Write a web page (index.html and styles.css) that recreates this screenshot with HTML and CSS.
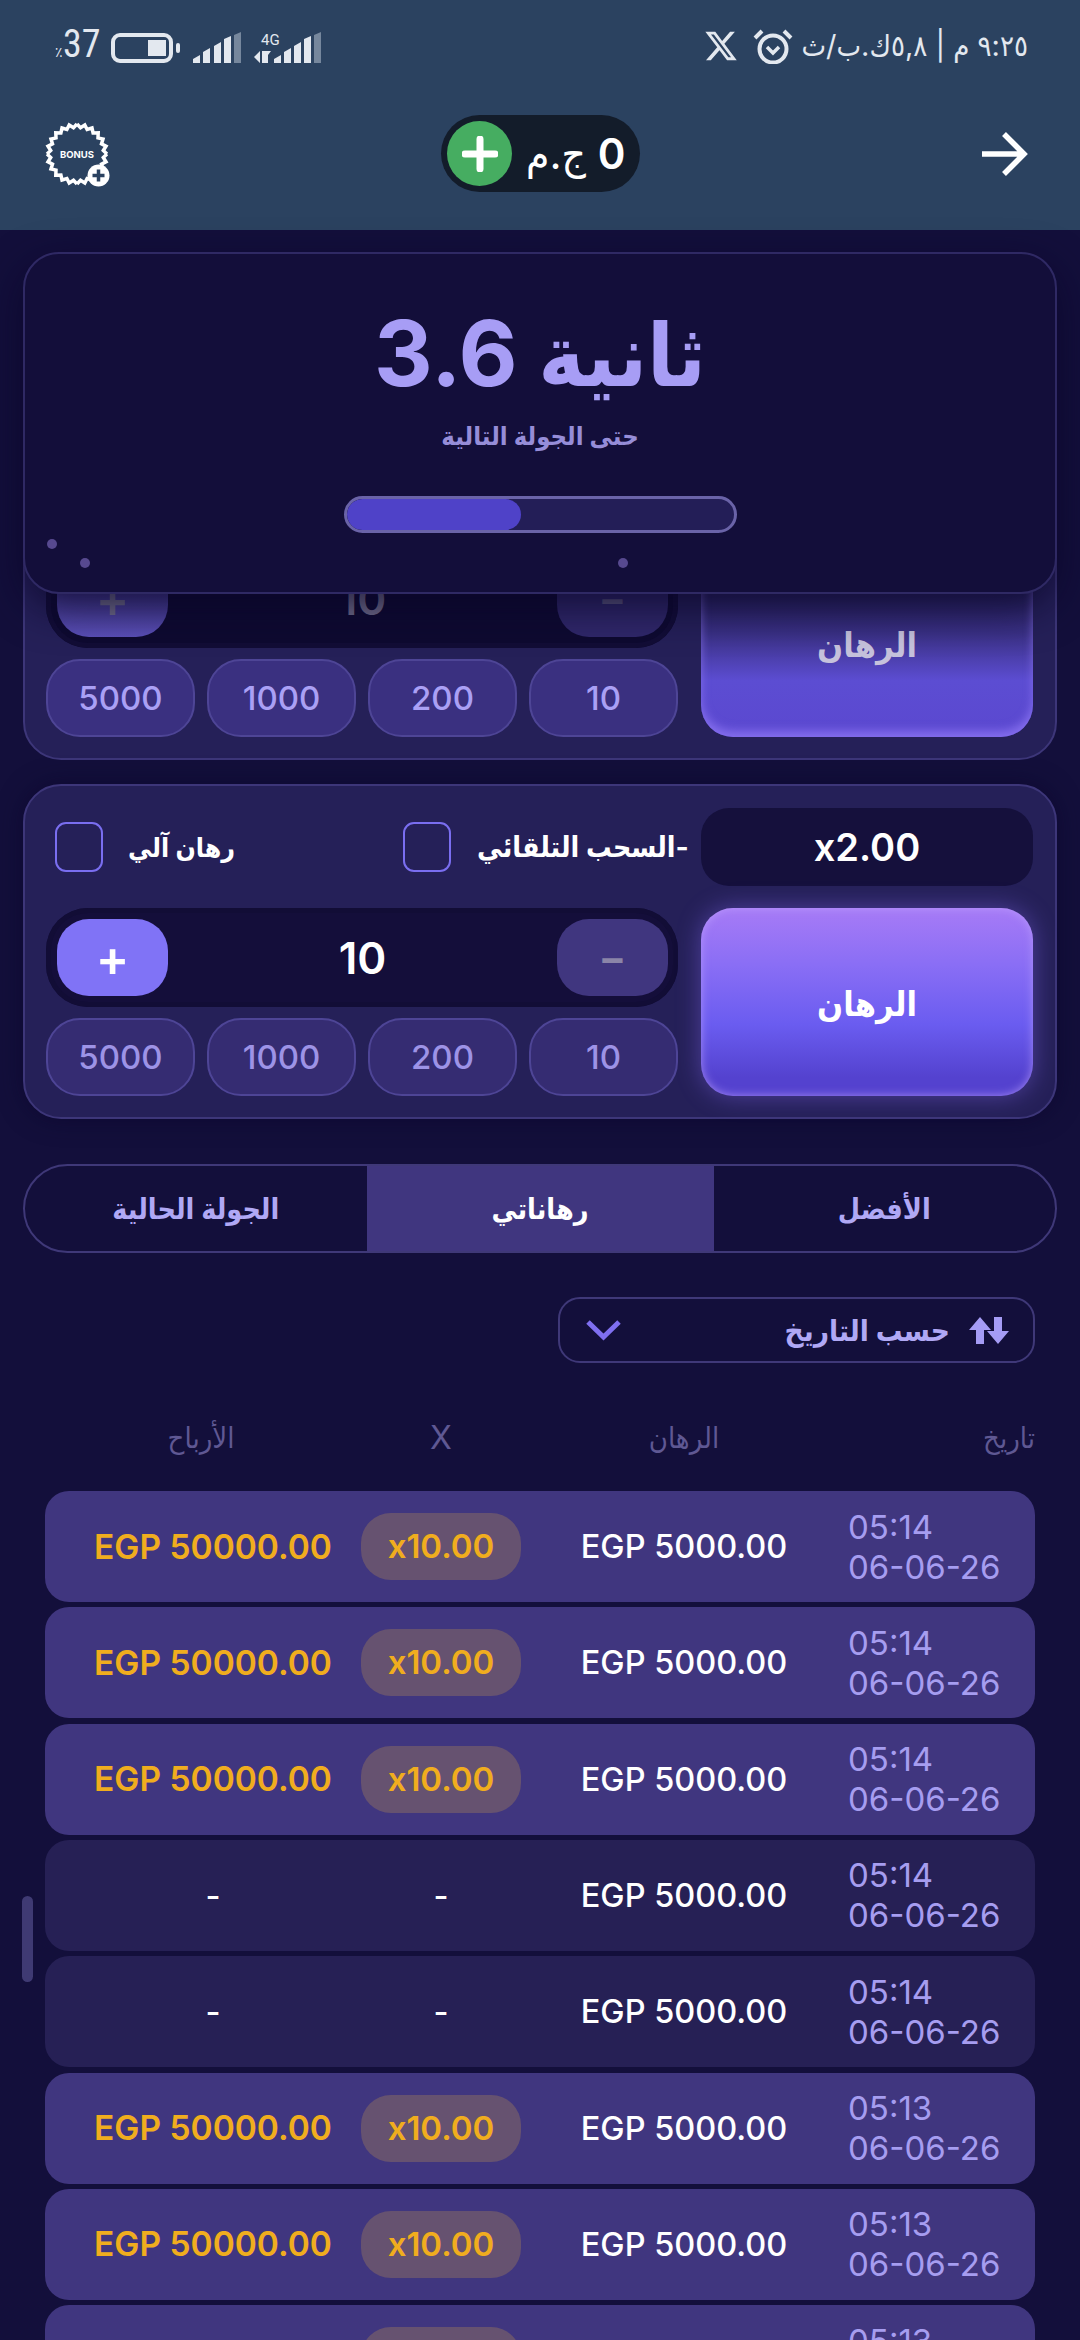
FILE: index.html
```html
<!DOCTYPE html>
<html lang="en">

<head>
    <meta charset="UTF-8">
    <meta name="viewport" content="width=device-width, initial-scale=1.0">
    <title>Bets</title>
    <link rel="stylesheet" href="styles.css">
</head>

<body>
    <header class="top">
        <div class="status">
            <div class="status-left">
                <span class="pct"><small>٪</small>37</span>
                <span class="battery"><i></i></span>
                <svg class="signal" width="48" height="32" viewBox="0 0 48 32" fill="#e3e8ef">
                    <path d="M0 31v-4l7-4v8zM10 31V20l7-4v15zM21 31V14l7-4v21zM31 31V7l7-3v27z"/>
                    <path d="M41 31V3l7-3v31z" fill="#76879d"/>
                </svg>
                <span class="net">
                    <b>4G</b>
                    <svg width="68" height="32" viewBox="0 0 68 32" fill="#e3e8ef">
                        <path d="M0 25l6-6v12zM8 19h0l6 0v12H8zM10 19h7l-3 4v8h-4zM20 31v-4l7-4v8zM30 31V20l7-4v15zM40 31V14l7-4v21zM50 31V7l7-3v27z"/>
                        <path d="M60 31V3l7-3v31z" fill="#76879d"/>
                    </svg>
                </span>
            </div>
            <div class="status-right">
                <svg width="32" height="30" viewBox="1 2 22 20" fill="#e3e8ef">
                    <path d="M18.244 2.25h3.308l-7.227 8.26 8.502 11.24H16.17l-5.214-6.817L4.99 21.75H1.68l7.73-8.835L1.254 2.25H8.08l4.713 6.231zm-1.161 17.52h1.833L7.084 4.126H5.117z"/>
                </svg>
                <svg width="40" height="36" viewBox="0 0 40 36" fill="none" stroke="#e3e8ef">
                    <circle cx="20" cy="21" r="13.5" stroke-width="4"/>
                    <path d="M14 19l6 6 6-6" stroke-width="3.5"/>
                    <path d="M2 10L9 3M38 10L31 3" stroke-width="4"/>
                </svg>
                <span class="speed" dir="rtl">٩:٢٥ م | ٥,٨ك.ب/ث</span>
            </div>
        </div>
        <div class="nav">
            <svg class="bonus" width="66" height="66" viewBox="-33 -33 66 66">
                <defs>
                    <polyline id="quad" points="30,0 26.3,3.5 29,7.8 24.5,10.1 26,15 21,16.1 21.2,21.2 16.1,21 15,26 10.1,24.5 7.8,29 3.5,26.3 0,30"/>
                </defs>
                <g fill="none" stroke="#fff" stroke-width="3.5">
                    <use href="#quad"/>
                    <use href="#quad" transform="rotate(90)"/>
                    <use href="#quad" transform="rotate(180)"/>
                    <use href="#quad" transform="rotate(270)"/>
                </g>
                <text x="0" y="4" text-anchor="middle" class="bonus-text">BONUS</text>
                <circle cx="21.500" cy="21.500" r="11" fill="#fff"/>
                <path d="M21.500 15.500v12M15.500 21.500h12" stroke="#2b4260" stroke-width="3.500"/>
            </svg>
            <div class="balance">
                <span class="add">
                    <svg width="36" height="36" viewBox="0 0 36 36"><path d="M18 3v30M3 18h30" stroke="#fff" stroke-width="7" stroke-linecap="round"/></svg>
                </span>
                <span class="amount" dir="rtl"><b>0</b> ج.م</span>
            </div>
            <svg class="back" width="46" height="44" viewBox="0 0 46 44" fill="none" stroke="#fff" stroke-width="5.500">
                <path d="M0 22h42M22 2l20 20-20 20"/>
            </svg>
        </div>
    </header>

    <main class="page">
        <div class="timer">
            <div class="timer-title" dir="rtl">ثانية <span class="timer-num">3.6</span></div>
            <div class="timer-sub" dir="rtl">حتى الجولة التالية</div>
            <div class="progress"><div class="progress-fill"></div></div>
            <i class="dot dot-a"></i>
            <i class="dot dot-b"></i>
            <i class="dot dot-c"></i>
        </div>

        <section class="panel panel-off">
            <div class="panel-left">
                <div class="options"></div>
                <div class="stepper">
                    <span class="step step-plus">+</span>
                    <span class="step-value">10</span>
                    <span class="step step-minus">−</span>
                </div>
                <div class="chips">
                    <span class="chip">5000</span>
                    <span class="chip">1000</span>
                    <span class="chip">200</span>
                    <span class="chip">10</span>
                </div>
            </div>
            <div class="panel-right">
                <div class="mult"></div>
                <button class="bet">الرهان</button>
            </div>
        </section>

        <section class="panel">
            <div class="panel-left">
                <div class="options">
                    <span class="box"></span>
                    <span class="option-text opt-auto" dir="rtl">رهان آلي</span>
                    <span class="box box-two"></span>
                    <span class="option-text opt-cash" dir="rtl">-السحب التلقائي</span>
                </div>
                <div class="stepper">
                    <span class="step step-plus">+</span>
                    <span class="step-value">10</span>
                    <span class="step step-minus">−</span>
                </div>
                <div class="chips">
                    <span class="chip">5000</span>
                    <span class="chip">1000</span>
                    <span class="chip">200</span>
                    <span class="chip">10</span>
                </div>
            </div>
            <div class="panel-right">
                <div class="mult">x2.00</div>
                <button class="bet">الرهان</button>
            </div>
        </section>

        <nav class="tabs">
            <span class="tab" dir="rtl">الجولة الحالية</span>
            <span class="tab tab-on" dir="rtl">رهاناتي</span>
            <span class="tab" dir="rtl">الأفضل</span>
        </nav>

        <div class="sort-wrap">
            <div class="sort">
                <svg width="35" height="22" viewBox="0 0 35 22" fill="none" class="chev">
                    <path d="M2 3l15.500 15L33 3" stroke="#7f6ff0" stroke-width="5"/>
                </svg>
                <span class="sort-text" dir="rtl">حسب التاريخ</span>
                <svg width="42" height="27" viewBox="0 0 42 27" fill="#a59cf5">
                    <path d="M12 0l11 13h-7v14H8V13H1zM26 0h8v14h7L30 27 19 14h7z"/>
                </svg>
            </div>
        </div>

        <div class="row-grid head">
            <span class="head-profit" dir="rtl">الأرباح</span>
            <span class="head-x">X</span>
            <span dir="rtl">الرهان</span>
            <span class="head-date" dir="ltr">تاريخ</span>
        </div>

        <div class="rows">
            <div class="row-grid row win">
                <span class="profit">EGP 50000.00</span>
                <span class="pill">x10.00</span>
                <span class="stake">EGP 5000.00</span>
                <span class="when">05:14<br>06-06-26</span>
            </div>
            <div class="row-grid row win">
                <span class="profit">EGP 50000.00</span>
                <span class="pill">x10.00</span>
                <span class="stake">EGP 5000.00</span>
                <span class="when">05:14<br>06-06-26</span>
            </div>
            <div class="row-grid row win">
                <span class="profit">EGP 50000.00</span>
                <span class="pill">x10.00</span>
                <span class="stake">EGP 5000.00</span>
                <span class="when">05:14<br>06-06-26</span>
            </div>
            <div class="row-grid row">
                <span class="none">-</span>
                <span class="none">-</span>
                <span class="stake">EGP 5000.00</span>
                <span class="when">05:14<br>06-06-26</span>
            </div>
            <div class="row-grid row">
                <span class="none">-</span>
                <span class="none">-</span>
                <span class="stake">EGP 5000.00</span>
                <span class="when">05:14<br>06-06-26</span>
            </div>
            <div class="row-grid row win">
                <span class="profit">EGP 50000.00</span>
                <span class="pill">x10.00</span>
                <span class="stake">EGP 5000.00</span>
                <span class="when">05:13<br>06-06-26</span>
            </div>
            <div class="row-grid row win">
                <span class="profit">EGP 50000.00</span>
                <span class="pill">x10.00</span>
                <span class="stake">EGP 5000.00</span>
                <span class="when">05:13<br>06-06-26</span>
            </div>
            <div class="row-grid row win">
                <span class="profit">EGP 50000.00</span>
                <span class="pill">x10.00</span>
                <span class="stake">EGP 5000.00</span>
                <span class="when">05:13<br>06-06-26</span>
            </div>
        </div>

        <div class="scrollbar"></div>
    </main>
</body>

</html>
```

FILE: styles.css
```css
html,
body {
    height: 2340px;
    overflow: hidden;
}

body {
    margin: 0;
    font-family: Inter, "DejaVu Sans Condensed", "DejaVu Sans", sans-serif;
    font-stretch: condensed;
    background-color: #130f3b;
    color: #fff;
}

/* header */

.top {
    height: 230px;
    background-color: #2b4260;
    box-sizing: border-box;
    padding-top: 28px;
}

.status {
    height: 36px;
    display: flex;
    justify-content: space-between;
    padding: 0 52px 0 55px;
    color: #e3e8ef;
}

.status-left,
.status-right {
    display: flex;
    align-items: center;
}

.status-right svg {
    margin-right: 16px;
}

.status-right svg + svg {
    margin-right: 8px;
}

.pct {
    font-family: Roboto, sans-serif;
    font-size: 38px;
    line-height: 36px;
    width: 46px;
    margin-top: 4px;
    white-space: nowrap;
}

.pct small {
    font-size: 14px;
}

.battery {
    width: 62px;
    height: 30px;
    margin: 4px 0 0 10px;
    border: 4px solid #e3e8ef;
    border-radius: 9px;
    box-sizing: border-box;
    display: flex;
    justify-content: flex-end;
    align-items: center;
    padding-right: 3px;
    position: relative;
}

.battery i {
    width: 18px;
    height: 16px;
    background-color: #e3e8ef;
}

.battery::after {
    content: "";
    position: absolute;
    right: -11px;
    top: 6px;
    width: 4px;
    height: 10px;
    border-radius: 2px;
    background-color: #e3e8ef;
}

.signal {
    margin: 4px 0 0 20px;
}

.net {
    position: relative;
    margin: 4px 0 0 13px;
    height: 32px;
}

.net b {
    position: absolute;
    left: 7px;
    top: -1px;
    font: 400 15px Roboto, sans-serif;
}

.speed {
    font-size: 29px;
    line-height: 36px;
    white-space: nowrap;
}

.nav {
    display: flex;
    align-items: center;
    justify-content: space-between;
    height: 77px;
    margin-top: 51px;
    padding: 0 52px 0 44px;
}

.bonus-text {
    font: 700 9.500px Inter, sans-serif;
    fill: #fff;
}

.balance {
    width: 199px;
    height: 77px;
    margin-right: 11px;
    border-radius: 39px;
    background-color: #131c2a;
    display: flex;
    align-items: center;
    padding-left: 6px;
    box-sizing: border-box;
}

.add {
    width: 65px;
    height: 65px;
    border-radius: 50%;
    background-color: #46ad61;
    display: flex;
    align-items: center;
    justify-content: center;
}

.amount {
    margin-left: 14px;
    font-size: 42px;
    white-space: nowrap;
}

.amount b {
    font-weight: 600;
    font-size: 42px;
}

/* main */

.page {
    position: relative;
    padding: 195px 23px 0;
}

.timer {
    position: absolute;
    top: 22px;
    left: 23px;
    right: 23px;
    height: 342px;
    box-sizing: border-box;
    border: 2px solid #2f2964;
    border-radius: 36px;
    background-color: #130e3a;
    box-shadow: 0 14px 40px rgba(10, 6, 40, 0.75);
    text-align: center;
    z-index: 2;
}

.timer-title {
    margin-top: 44px;
    font-size: 87px;
    line-height: 110px;
    font-weight: 700;
    color: #a79df5;
}

.timer-num {
    font-size: 91px;
}

.timer-sub {
    margin-top: 8px;
    font-size: 25.500px;
    line-height: 36px;
    font-weight: 700;
    color: #968dd8;
}

.progress {
    width: 393px;
    height: 37px;
    margin: 42px auto 0;
    box-sizing: border-box;
    border: 3px solid #6a63a8;
    border-radius: 19px;
    background-color: #231e57;
    overflow: hidden;
}

.progress-fill {
    width: 45%;
    height: 100%;
    border-radius: 19px;
    background-color: #4f42c8;
}

.dot {
    position: absolute;
    width: 10px;
    height: 10px;
    border-radius: 50%;
    background-color: #57498f;
}

.dot-a {
    left: 22px;
    top: 285px;
}

.dot-b {
    left: 55px;
    top: 304px;
}

.dot-c {
    left: 593px;
    top: 304px;
}

.panel {
    height: 335px;
    box-sizing: border-box;
    margin-bottom: 24px;
    padding: 22px 22px 21px 21px;
    display: flex;
    gap: 23px;
    border: 2px solid #3d3679;
    border-radius: 38px;
    background-color: #252058;
    box-shadow: 0 0 24px rgba(8, 4, 40, 0.5);
}

.panel-left {
    width: 632px;
    display: flex;
    flex-direction: column;
}

.panel-right {
    flex: 1;
    display: flex;
    flex-direction: column;
    gap: 22px;
}

.options {
    height: 78px;
    margin-bottom: 22px;
    display: flex;
    align-items: center;
    padding-left: 9px;
}

.box {
    flex: none;
    width: 48px;
    height: 50px;
    box-sizing: border-box;
    border: 2px solid #7a6ef0;
    border-radius: 11px;
}

.box-two {
    margin-left: 168px;
}

.option-text {
    margin-left: 26px;
    font-weight: 700;
    white-space: nowrap;
}

.opt-auto {
    flex: none;
    width: 106px;
    font-size: 26.500px;
}

.opt-cash {
    font-size: 28.300px;
}

.stepper {
    height: 99px;
    box-sizing: border-box;
    padding: 0 10px 0 11px;
    display: flex;
    align-items: center;
    justify-content: space-between;
    border-radius: 42px;
    background-color: #140e3a;
    box-shadow: inset 0 0 0 5px #120d36;
}

.step {
    width: 111px;
    height: 77px;
    border-radius: 32px;
    display: flex;
    align-items: center;
    justify-content: center;
    font-size: 50px;
    font-weight: 600;
}

.step-plus {
    background-color: #8073f6;
}

.step-minus {
    background-color: #40367f;
    color: #8b85a8;
    font-size: 42px;
}

.step-value {
    font-size: 44px;
    font-weight: 600;
}

.chips {
    margin-top: 11px;
    display: flex;
    gap: 12px;
}

.chip {
    flex: 1;
    height: 78px;
    box-sizing: border-box;
    display: flex;
    align-items: center;
    justify-content: center;
    border: 2px solid #4e4596;
    border-radius: 34px;
    background-color: #352c72;
    color: #9d93e6;
    font-size: 33px;
    font-weight: 500;
}

.mult {
    height: 78px;
    display: flex;
    align-items: center;
    justify-content: center;
    border-radius: 28px;
    background-color: #15103c;
    font-size: 38px;
    font-weight: 600;
}

.bet {
    height: 188px;
    border: none;
    border-radius: 32px;
    background: linear-gradient(#a77bf6 0%, #8a6ef5 30%, #6a5cf0 62%, #5442cf 90%);
    box-shadow: 0 0 24px rgba(130, 105, 245, 0.45), inset 0 0 10px rgba(190, 160, 255, 0.75);
    color: #fff;
    font-family: inherit;
    font-stretch: inherit;
    font-size: 34px;
    font-weight: 700;
    padding-top: 4px;
}

.panel-off {
    box-shadow: none;
}

.panel-off .mult {
    background-color: transparent;
}

.panel-off .step-plus {
    background: linear-gradient(#332a70, #5b50b8);
    color: #77738f;
}

.panel-off .step-minus {
    background-color: #30286a;
    color: #5f5a80;
}

.panel-off .step-value {
    color: #77738f;
}

.panel-off .stepper {
    background-color: #0e0a30;
}

.panel-off .chip {
    background-color: #3a3080;
    color: #aaa0f5;
}

.panel-off .bet {
    background: linear-gradient(#2a2462 25%, #3b3186 45%, #5c4dd2 70%, #5b48d0 100%);
    box-shadow: inset 0 -6px 10px rgba(150, 125, 250, 0.7);
    color: #c6c2dc;
}

/* tabs */

.tabs {
    margin-top: 45px;
    height: 89px;
    box-sizing: border-box;
    display: flex;
    border: 2px solid #3f3878;
    border-radius: 45px;
    overflow: hidden;
}

.tab {
    flex: 1;
    display: flex;
    align-items: center;
    justify-content: center;
    font-size: 28.500px;
    font-weight: 700;
    color: #b0a8f5;
}

.tab-on {
    flex: none;
    width: 347px;
    background-color: #40367f;
    color: #fff;
}

.sort-wrap {
    margin-top: 44px;
    display: flex;
    justify-content: flex-end;
    padding-right: 22px;
}

.sort {
    width: 477px;
    height: 66px;
    box-sizing: border-box;
    display: flex;
    align-items: center;
    padding: 0 23px 0 26px;
    border: 2px solid #3f3878;
    border-radius: 22px;
}

.sort-text {
    margin-left: auto;
    margin-right: 18px;
    font-size: 29.500px;
    font-weight: 700;
    color: #b0a8f5;
}

/* table */

.row-grid {
    display: grid;
    grid-template-columns: 296px 160px 326px 1fr;
    align-items: center;
    text-align: center;
    margin: 0 22px;
    padding-left: 20px;
}

.head {
    height: 60px;
    margin-top: 44px;
    font-size: 29px;
    font-weight: 400;
    color: #5f5893;
}

.head-profit {
    padding-right: 24px;
}

.head-x {
    font-size: 32px;
}

.head-date {
    text-align: right;
}

.rows {
    margin-top: 24px;
    display: flex;
    flex-direction: column;
    gap: 5.330px;
}

.row {
    height: 111px;
    flex: none;
    border-radius: 24px;
    background-color: #262055;
    font-size: 32.500px;
    font-weight: 500;
}

.win {
    background-color: #40367f;
}

.profit {
    color: #f0ad1e;
    font-size: 33.500px;
    font-weight: 600;
}

.pill {
    height: 67px;
    line-height: 67px;
    border-radius: 30px;
    background-color: #665270;
    color: #f0ad1e;
    font-size: 33px;
    font-weight: 600;
}

.when {
    text-align: left;
    padding-left: 1px;
    font-size: 33px;
    font-weight: 400;
    line-height: 40px;
    color: #a69df0;
}

.scrollbar {
    position: absolute;
    left: 22px;
    top: 1666px;
    width: 11px;
    height: 86px;
    border-radius: 6px;
    background-color: #3f3a73;
}
```
